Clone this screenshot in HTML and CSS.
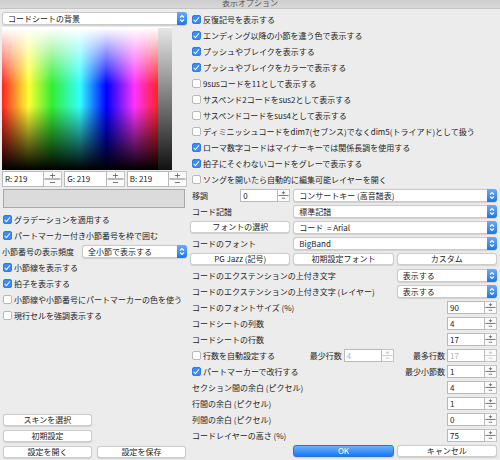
FILE: index.html
```html
<!DOCTYPE html>
<html lang="ja">
<head>
    <meta charset="UTF-8">
    <title>表示オプション</title>
    <link rel="stylesheet" href="styles.css">
</head>
<body>
<div class="window">
    <div class="titlebar">表示オプション</div>
    <div class="content">

        <!-- 左側: 背景色など -->
        <div class="left-pane">
            <div class="select">
                <span class="select-text">コードシートの背景</span>
                <span class="arrows"><svg viewBox="0 0 10 13"><path d="M3 5.5L5 3.5L7 5.5M3 7.5L5 9.5L7 7.5"/></svg></span>
            </div>
            <div class="picker">
                <div class="spectrum"></div>
                <div class="lightness"></div>
            </div>
            <div class="rgb-row">
                <div class="spin rgb"><span class="field">R: 219</span><span class="stepper"><svg viewBox="0 0 18 16"><path d="M0 8H18M9 1.5V6.5M6 4H12M6 12H12"/></svg></span></div>
                <div class="spin rgb"><span class="field">G: 219</span><span class="stepper"><svg viewBox="0 0 18 16"><path d="M0 8H18M9 1.5V6.5M6 4H12M6 12H12"/></svg></span></div>
                <div class="spin rgb"><span class="field">B: 219</span><span class="stepper"><svg viewBox="0 0 18 16"><path d="M0 8H18M9 1.5V6.5M6 4H12M6 12H12"/></svg></span></div>
            </div>
            <div class="swatch"></div>

            <div class="checks">
                <div class="row"><span class="box on"></span>グラデーションを適用する</div>
                <div class="row"><span class="box on"></span>パートマーカー付き小節番号を枠で囲む</div>
                <div class="row">
                    <span>小節番号の表示頻度</span>
                    <div class="select freq">
                        <span class="select-text">全小節で表示する</span>
                        <span class="arrows"><svg viewBox="0 0 10 13"><path d="M3 5.5L5 3.5L7 5.5M3 7.5L5 9.5L7 7.5"/></svg></span>
                    </div>
                </div>
                <div class="row"><span class="box on"></span>小節線を表示する</div>
                <div class="row"><span class="box on"></span>拍子を表示する</div>
                <div class="row"><span class="box"></span>小節線や小節番号にパートマーカーの色を使う</div>
                <div class="row"><span class="box"></span>現行セルを強調表示する</div>
            </div>

            <div class="left-buttons">
                <button class="btn">スキンを選択</button>
                <span></span>
                <button class="btn">初期設定</button>
                <span></span>
                <button class="btn">設定を開く</button>
                <button class="btn">設定を保存</button>
            </div>
        </div>

        <!-- 右側: 表示オプション -->
        <div class="right-pane">
            <div class="row"><span class="box on"></span>反復記号を表示する</div>
            <div class="row"><span class="box on"></span>エンディング以降の小節を違う色で表示する</div>
            <div class="row"><span class="box on"></span>プッシュやブレイクを表示する</div>
            <div class="row"><span class="box on"></span>プッシュやブレイクをカラーで表示する</div>
            <div class="row"><span class="box"></span>9susコードを11として表示する</div>
            <div class="row"><span class="box"></span>サスペンド2コードをsus2として表示する</div>
            <div class="row"><span class="box"></span>サスペンドコードをsus4として表示する</div>
            <div class="row"><span class="box"></span>ディミニッシュコードをdim7(セブンス)でなくdim5(トライアド)として扱う</div>
            <div class="row"><span class="box on"></span>ローマ数字コードはマイナーキーでは関係長調を使用する</div>
            <div class="row"><span class="box on"></span>拍子にそぐわないコードをグレーで表示する</div>
            <div class="row"><span class="box"></span>ソングを開いたら自動的に編集可能レイヤーを開く</div>

            <div class="row grid3">
                <div class="cell">
                    <span class="label">移調</span>
                    <div class="spin"><span class="field">0</span><span class="stepper"><svg viewBox="0 0 12 13"><path d="M0 6.5H12M6 1.5V5M4 3.25H8M4 9.75H8"/></svg></span></div>
                </div>
                <div class="select span2">
                    <span class="select-text">コンサートキー (高音譜表)</span>
                    <span class="arrows"><svg viewBox="0 0 10 13"><path d="M3 5.5L5 3.5L7 5.5M3 7.5L5 9.5L7 7.5"/></svg></span>
                </div>
            </div>
            <div class="row grid3">
                <span class="label">コード記譜</span>
                <div class="select span2">
                    <span class="select-text">標準記譜</span>
                    <span class="arrows"><svg viewBox="0 0 10 13"><path d="M3 5.5L5 3.5L7 5.5M3 7.5L5 9.5L7 7.5"/></svg></span>
                </div>
            </div>
            <div class="row grid3">
                <button class="btn">フォントの選択</button>
                <div class="select span2">
                    <span class="select-text">コード&nbsp; = Arial</span>
                    <span class="arrows"><svg viewBox="0 0 10 13"><path d="M3 5.5L5 3.5L7 5.5M3 7.5L5 9.5L7 7.5"/></svg></span>
                </div>
            </div>
            <div class="row grid3">
                <span class="label">コードのフォント</span>
                <div class="select span2">
                    <span class="select-text">BigBand</span>
                    <span class="arrows"><svg viewBox="0 0 10 13"><path d="M3 5.5L5 3.5L7 5.5M3 7.5L5 9.5L7 7.5"/></svg></span>
                </div>
            </div>
            <div class="row grid3">
                <button class="btn">PG Jazz (記号)</button>
                <button class="btn">初期設定フォント</button>
                <button class="btn">カスタム</button>
            </div>
            <div class="row grid3">
                <span class="label span2">コードのエクステンションの上付き文字</span>
                <div class="select">
                    <span class="select-text">表示する</span>
                    <span class="arrows"><svg viewBox="0 0 10 13"><path d="M3 5.5L5 3.5L7 5.5M3 7.5L5 9.5L7 7.5"/></svg></span>
                </div>
            </div>
            <div class="row grid3">
                <span class="label span2">コードのエクステンションの上付き文字 (レイヤー)</span>
                <div class="select">
                    <span class="select-text">表示する</span>
                    <span class="arrows"><svg viewBox="0 0 10 13"><path d="M3 5.5L5 3.5L7 5.5M3 7.5L5 9.5L7 7.5"/></svg></span>
                </div>
            </div>
            <div class="row">
                <span class="label grow">コードのフォントサイズ (%)</span>
                <div class="spin"><span class="field">90</span><span class="stepper"><svg viewBox="0 0 12 13"><path d="M0 6.5H12M6 1.5V5M4 3.25H8M4 9.75H8"/></svg></span></div>
            </div>
            <div class="row">
                <span class="label grow">コードシートの列数</span>
                <div class="spin"><span class="field">4</span><span class="stepper"><svg viewBox="0 0 12 13"><path d="M0 6.5H12M6 1.5V5M4 3.25H8M4 9.75H8"/></svg></span></div>
            </div>
            <div class="row">
                <span class="label grow">コードシートの行数</span>
                <div class="spin"><span class="field">17</span><span class="stepper"><svg viewBox="0 0 12 13"><path d="M0 6.5H12M6 1.5V5M4 3.25H8M4 9.75H8"/></svg></span></div>
            </div>
            <div class="row grid3">
                <div class="cell"><span class="box"></span>行数を自動設定する</div>
                <div class="cell end">
                    <span>最少行数</span>
                    <div class="spin off"><span class="field">4</span><span class="stepper"><svg viewBox="0 0 12 13"><path d="M0 6.5H12M6 1.5V5M4 3.25H8M4 9.75H8"/></svg></span></div>
                </div>
                <div class="cell end">
                    <span>最多行数</span>
                    <div class="spin off"><span class="field">17</span><span class="stepper"><svg viewBox="0 0 12 13"><path d="M0 6.5H12M6 1.5V5M4 3.25H8M4 9.75H8"/></svg></span></div>
                </div>
            </div>
            <div class="row grid3">
                <div class="cell span2"><span class="box on"></span>パートマーカーで改行する</div>
                <div class="cell end">
                    <span>最少小節数</span>
                    <div class="spin"><span class="field">1</span><span class="stepper"><svg viewBox="0 0 12 13"><path d="M0 6.5H12M6 1.5V5M4 3.25H8M4 9.75H8"/></svg></span></div>
                </div>
            </div>
            <div class="row">
                <span class="label grow">セクション間の余白 (ピクセル)</span>
                <div class="spin"><span class="field">4</span><span class="stepper"><svg viewBox="0 0 12 13"><path d="M0 6.5H12M6 1.5V5M4 3.25H8M4 9.75H8"/></svg></span></div>
            </div>
            <div class="row">
                <span class="label grow">行間の余白 (ピクセル)</span>
                <div class="spin"><span class="field">1</span><span class="stepper"><svg viewBox="0 0 12 13"><path d="M0 6.5H12M6 1.5V5M4 3.25H8M4 9.75H8"/></svg></span></div>
            </div>
            <div class="row">
                <span class="label grow">列間の余白 (ピクセル)</span>
                <div class="spin"><span class="field">0</span><span class="stepper"><svg viewBox="0 0 12 13"><path d="M0 6.5H12M6 1.5V5M4 3.25H8M4 9.75H8"/></svg></span></div>
            </div>
            <div class="row">
                <span class="label grow">コードレイヤーの高さ (%)</span>
                <div class="spin"><span class="field">75</span><span class="stepper"><svg viewBox="0 0 12 13"><path d="M0 6.5H12M6 1.5V5M4 3.25H8M4 9.75H8"/></svg></span></div>
            </div>
            <div class="row grid3">
                <span></span>
                <button class="btn primary">OK</button>
                <button class="btn">キャンセル</button>
            </div>
        </div>
    </div>
</div>
</body>
</html>
```

FILE: styles.css
```css
* {
    box-sizing: border-box;
}

body {
    margin: 0;
    background: #ececec;
    color: #1c1c1c;
    font-family: "Noto Sans CJK JP", "Noto Sans", sans-serif;
    font-size: 8px;
}

.window {
    width: 500px;
    height: 460px;
    display: flex;
    flex-direction: column;
    overflow: hidden;
}

.titlebar {
    height: 9px;
    line-height: 6px;
    text-align: center;
    color: #555;
    background: linear-gradient(#cdcdcd, #d8d8d8);
    border-bottom: 1px solid #c4c4c4;
    overflow: hidden;
}

.content {
    flex: 1;
    display: flex;
}

/* left pane */
.left-pane {
    width: 190px;
    padding: 3px 3px 0 2px;
    display: flex;
    flex-direction: column;
}

.picker {
    margin-top: 2px;
    width: 170px;
    height: 143px;
    display: flex;
    background: #fff;
    padding-top: 1px;
}

.spectrum {
    flex: 1;
    background:
        linear-gradient(to bottom, #fff 0%, rgba(255,255,255,0) 40%, rgba(0,0,0,0) 55%, #000 100%),
        linear-gradient(to right, #f22 0%, #ff3 17%, #3e3 32%, #3ff 50%, #00f 67%, #f3f 85%, #f22 100%);
}

.lightness {
    width: 14px;
    background: linear-gradient(#e6e6e6, #111);
}

.rgb-row {
    margin-top: 1px;
    height: 16px;
    display: flex;
    gap: 2px;
}

.swatch {
    margin: 2px 2px 0 1px;
    height: 19px;
    background: #dbdbdb;
    border: 1px solid #a9a9a9;
}

.checks {
    margin-top: 3px;
}

.left-pane .box {
    margin-left: 1px;
}

.freq {
    margin-left: auto;
    width: 105px;
}

.left-buttons {
    margin-top: auto;
    padding: 0 1px;
    display: grid;
    grid-template-columns: 1fr 1fr;
    grid-auto-rows: 16px;
    column-gap: 5px;
    align-items: center;
}

/* right pane */
.right-pane {
    flex: 1;
    padding: 2px 3px 0 0;
}

.row {
    height: 16px;
    display: flex;
    align-items: center;
    white-space: nowrap;
}

.grid3 {
    display: grid;
    grid-template-columns: repeat(3, 1fr);
    column-gap: 3px;
    align-items: center;
}

.span2 {
    grid-column: span 2;
}

.cell {
    display: flex;
    align-items: center;
}

.cell.end {
    justify-content: flex-end;
    gap: 2px;
}

.cell .spin {
    margin-left: auto;
}

.cell.end .spin {
    margin-left: 0;
}

.label {
    margin-left: 2px;
}

.grow {
    flex: 1;
}

/* checkbox */
.box {
    position: relative;
    flex: none;
    width: 9px;
    height: 9px;
    margin: 0 2px;
    background: #fff;
    border: 1px solid #b8b8b8;
    border-radius: 2px;
}

.box.on {
    background: #3b8bf5;
    border-color: #2e7ce6;
}

.box.on::after {
    content: "";
    position: absolute;
    left: 2.3px;
    top: 0.3px;
    width: 2px;
    height: 4.5px;
    border: solid #fff;
    border-width: 0 1.4px 1.4px 0;
    transform: rotate(40deg);
}

/* popup menu */
.select {
    height: 13px;
    display: flex;
    align-items: center;
    padding-left: 5px;
    background: #fff;
    border: 1px solid #cacaca;
    border-radius: 3px;
    box-shadow: 0 0.5px 1px rgba(0, 0, 0, 0.12);
}

.select-text {
    flex: 1;
    overflow: hidden;
}

.arrows {
    width: 10px;
    height: 13px;
    margin: -1px -1px -1px 0;
    display: flex;
    border-radius: 0 3px 3px 0;
    background: linear-gradient(#67adfb, #1d74ec);
}

.arrows svg {
    width: 10px;
    height: 13px;
    fill: none;
    stroke: #fff;
    stroke-width: 1.1;
}

/* number field with stepper */
.spin {
    flex: none;
    display: flex;
    width: 50px;
    height: 13px;
}

.spin .field {
    flex: 1;
    padding-left: 2px;
    line-height: 11px;
    background: #fff;
    border: 1px solid #b9b9b9;
}

.stepper {
    width: 12px;
    display: flex;
    background: #fafafa;
    border: 1px solid #c4c4c4;
    border-left: none;
}

.stepper svg {
    width: 100%;
    height: 100%;
    fill: none;
    stroke: #555;
    stroke-width: 0.9;
}

.stepper svg path {
    stroke-linecap: butt;
}

.spin.off .field {
    color: #b5b5b5;
}

.spin.off .stepper svg {
    stroke: #c0c0c0;
}

.spin.rgb {
    flex: 1;
    height: 16px;
}

.spin.rgb .field {
    line-height: 14px;
}

.spin.rgb .stepper {
    width: 18px;
}

/* buttons */
.btn {
    height: 12px;
    padding: 0;
    font: inherit;
    color: inherit;
    line-height: 10px;
    text-align: center;
    background: #fff;
    border: 1px solid #cdcdcd;
    border-radius: 3px;
    box-shadow: 0 0.5px 1px rgba(0, 0, 0, 0.12);
}

.btn.primary {
    color: #fff;
    background: linear-gradient(#6cb2fb, #1a78f2);
    border-color: #2b74dc;
}
```
